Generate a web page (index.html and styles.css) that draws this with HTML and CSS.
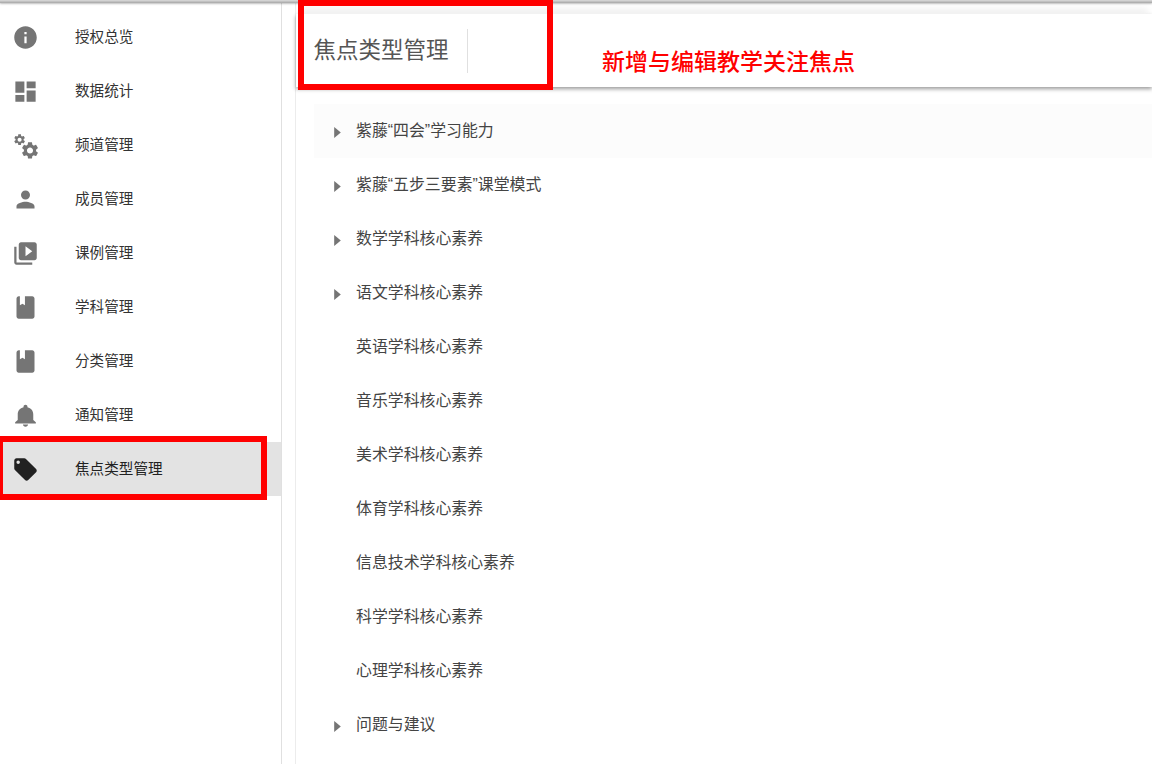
FILE: index.html
```html
<!DOCTYPE html>
<html lang="zh-CN">
<head>
    <meta charset="UTF-8">
    <meta name="viewport" content="width=device-width, initial-scale=1.0">
    <title>焦点类型管理</title>
    <link rel="stylesheet" href="styles.css">
</head>
<body>
    <div class="topbar"></div>
    <div class="layout">
        <nav class="sidebar">
            <a class="nav-item">
                <svg class="nav-icon" viewBox="0 0 24 24"><path d="M12 2C6.48 2 2 6.48 2 12s4.48 10 10 10 10-4.48 10-10S17.52 2 12 2zm1 15h-2v-6h2v6zm0-8h-2V7h2v2z"/></svg>
                <span>授权总览</span>
            </a>
            <a class="nav-item">
                <svg class="nav-icon" viewBox="0 0 24 24"><path d="M3 13h8V3H3v10zm0 8h8v-6H3v6zm10 0h8V11h-8v10zm0-18v6h8V3h-8z"/></svg>
                <span>数据统计</span>
            </a>
            <a class="nav-item">
                <svg class="nav-icon" viewBox="0 0 24 24">
                    <path transform="translate(0.75 0.8) scale(0.5)" d="M19.14 12.94c.04-.3.06-.61.06-.94 0-.32-.02-.64-.07-.94l2.03-1.58c.18-.14.23-.41.12-.61l-1.92-3.32c-.12-.22-.37-.29-.59-.22l-2.39.96c-.5-.38-1.03-.7-1.62-.94l-.36-2.54c-.04-.24-.24-.41-.48-.41h-3.84c-.24 0-.43.17-.47.41l-.36 2.54c-.59.24-1.13.57-1.62.94l-2.39-.96c-.22-.08-.47 0-.59.22L2.74 8.87c-.12.21-.08.47.12.61l2.03 1.58c-.05.3-.09.63-.09.94s.02.64.07.94l-2.03 1.58c-.18.14-.23.41-.12.61l1.92 3.32c.12.22.37.29.59.22l2.39-.96c.5.38 1.03.7 1.62.94l.36 2.54c.05.24.24.41.48.41h3.84c.24 0 .44-.17.47-.41l.36-2.54c.59-.24 1.13-.56 1.62-.94l2.39.96c.22.08.47 0 .59-.22l1.92-3.32c.12-.22.07-.47-.12-.61l-2.01-1.58zM12 15.6c-1.98 0-3.6-1.62-3.6-3.6s1.62-3.6 3.6-3.6 3.6 1.62 3.6 3.6-1.62 3.6-3.6 3.6z"/>
                    <path transform="translate(7 7.4) scale(0.75)" d="M19.14 12.94c.04-.3.06-.61.06-.94 0-.32-.02-.64-.07-.94l2.03-1.58c.18-.14.23-.41.12-.61l-1.92-3.32c-.12-.22-.37-.29-.59-.22l-2.39.96c-.5-.38-1.03-.7-1.62-.94l-.36-2.54c-.04-.24-.24-.41-.48-.41h-3.84c-.24 0-.43.17-.47.41l-.36 2.54c-.59.24-1.13.57-1.62.94l-2.39-.96c-.22-.08-.47 0-.59.22L2.74 8.87c-.12.21-.08.47.12.61l2.03 1.58c-.05.3-.09.63-.09.94s.02.64.07.94l-2.03 1.58c-.18.14-.23.41-.12.61l1.92 3.32c.12.22.37.29.59.22l2.39-.96c.5.38 1.03.7 1.62.94l.36 2.54c.05.24.24.41.48.41h3.84c.24 0 .44-.17.47-.41l.36-2.54c.59-.24 1.13-.56 1.62-.94l2.39.96c.22.08.47 0 .59-.22l1.92-3.32c.12-.22.07-.47-.12-.61l-2.01-1.58zM12 15.6c-1.98 0-3.6-1.62-3.6-3.6s1.62-3.6 3.6-3.6 3.6 1.62 3.6 3.6-1.62 3.6-3.6 3.6z"/>
                </svg>
                <span>频道管理</span>
            </a>
            <a class="nav-item">
                <svg class="nav-icon" viewBox="0 0 24 24"><path d="M12 12c2.21 0 4-1.79 4-4s-1.79-4-4-4-4 1.79-4 4 1.79 4 4 4zm0 2c-2.67 0-8 1.34-8 4v2h16v-2c0-2.66-5.33-4-8-4z"/></svg>
                <span>成员管理</span>
            </a>
            <a class="nav-item">
                <svg class="nav-icon" viewBox="0 0 24 24"><path d="M4 6H2v14c0 1.1.9 2 2 2h14v-2H4V6zm16-4H8c-1.1 0-2 .9-2 2v12c0 1.1.9 2 2 2h12c1.1 0 2-.9 2-2V4c0-1.1-.9-2-2-2zm-8 12.5v-9l6 4.5-6 4.5z"/></svg>
                <span>课例管理</span>
            </a>
            <a class="nav-item">
                <svg class="nav-icon" viewBox="0 0 24 24"><path d="M18 2h-6.5v8L9.3 8.6 7 10V2H6c-1.1 0-2 .9-2 2v16c0 1.1.9 2 2 2h12c1.1 0 2-.9 2-2V4c0-1.1-.9-2-2-2z"/></svg>
                <span>学科管理</span>
            </a>
            <a class="nav-item">
                <svg class="nav-icon" viewBox="0 0 24 24"><path d="M18 2h-6.5v8L9.3 8.6 7 10V2H6c-1.1 0-2 .9-2 2v16c0 1.1.9 2 2 2h12c1.1 0 2-.9 2-2V4c0-1.1-.9-2-2-2z"/></svg>
                <span>分类管理</span>
            </a>
            <a class="nav-item">
                <svg class="nav-icon" viewBox="0 0 24 24"><path transform="translate(-1.8 0) scale(1.15 1)" d="M12 22c1.1 0 2-.9 2-2h-4c0 1.1.9 2 2 2zm6-6v-5c0-3.07-1.63-5.64-4.5-6.32V4c0-.83-.67-1.5-1.5-1.5s-1.5.67-1.5 1.5v.68C7.64 5.36 6 7.92 6 11v5l-2 2v1h16v-1l-2-2z"/></svg>
                <span>通知管理</span>
            </a>
            <a class="nav-item active">
                <svg class="nav-icon" viewBox="0 0 24 24"><path d="M21.41 11.58l-9-9C12.05 2.22 11.55 2 11 2H4c-1.1 0-2 .9-2 2v7c0 .55.22 1.05.59 1.42l9 9c.36.36.86.58 1.41.58.55 0 1.05-.22 1.41-.59l7-7c.37-.36.59-.86.59-1.41 0-.55-.23-1.06-.59-1.42zM5.5 7C4.67 7 4 6.33 4 5.5S4.67 4 5.5 4 7 4.67 7 5.5 6.33 7 5.5 7z"/></svg>
                <span>焦点类型管理</span>
            </a>
        </nav>

        <main class="main">
            <header class="page-header">
                <h1 class="page-title">焦点类型管理</h1>
            </header>
            <ul class="tree">
                <li class="tree-row hover"><svg class="arrow" viewBox="0 0 6 10"><path d="M0 0l6 5-6 5z"/></svg><span>紫藤“四会”学习能力</span></li>
                <li class="tree-row"><svg class="arrow" viewBox="0 0 6 10"><path d="M0 0l6 5-6 5z"/></svg><span>紫藤“五步三要素”课堂模式</span></li>
                <li class="tree-row"><svg class="arrow" viewBox="0 0 6 10"><path d="M0 0l6 5-6 5z"/></svg><span>数学学科核心素养</span></li>
                <li class="tree-row"><svg class="arrow" viewBox="0 0 6 10"><path d="M0 0l6 5-6 5z"/></svg><span>语文学科核心素养</span></li>
                <li class="tree-row leaf"><span>英语学科核心素养</span></li>
                <li class="tree-row leaf"><span>音乐学科核心素养</span></li>
                <li class="tree-row leaf"><span>美术学科核心素养</span></li>
                <li class="tree-row leaf"><span>体育学科核心素养</span></li>
                <li class="tree-row leaf"><span>信息技术学科核心素养</span></li>
                <li class="tree-row leaf"><span>科学学科核心素养</span></li>
                <li class="tree-row leaf"><span>心理学科核心素养</span></li>
                <li class="tree-row"><svg class="arrow" viewBox="0 0 6 10"><path d="M0 0l6 5-6 5z"/></svg><span>问题与建议</span></li>
            </ul>
        </main>
    </div>

    <!-- Annotations drawn over the screenshot -->
    <div class="mark mark-title"></div>
    <div class="mark mark-nav"></div>
    <p class="note">新增与编辑教学关注焦点</p>
</body>
</html>
```

FILE: styles.css
```css
* {
    margin: 0;
    padding: 0;
    box-sizing: border-box;
}

html, body {
    height: 100%;
    overflow: hidden;
}

body {
    display: flex;
    flex-direction: column;
    background: #fff;
    color: #333;
    font-family: "Liberation Sans", "Noto Sans CJK SC", sans-serif;
}

.topbar {
    height: 3px;
    flex: none;
    background: linear-gradient(#dcdcdc, #a6a6a6);
    box-shadow: 0 1px 2px rgba(0, 0, 0, 0.25);
    position: relative;
    z-index: 2;
}

.layout {
    flex: 1;
    display: flex;
    min-height: 0;
}

.sidebar {
    width: 282px;
    flex: none;
    padding-top: 7px;
    border-right: 1px solid #e0e0e0;
}

.nav-item {
    display: flex;
    align-items: center;
    height: 54px;
    padding-left: 12px;
    font-size: 14.6px;
    color: #333;
}

.nav-item span {
    margin-left: 36px;
    margin-bottom: 4px;
}

.nav-icon {
    width: 27px;
    height: 27px;
    flex: none;
    fill: #757575;
}

.nav-item.active {
    background: #e3e3e3;
    color: #212121;
}

.nav-item.active .nav-icon {
    fill: #212121;
}

.main {
    flex: 1;
    margin-left: 13px;
    border-left: 1px solid #ececec;
    min-width: 0;
}

.page-header {
    height: 73px;
    margin-top: 11px;
    display: flex;
    align-items: center;
    background: #fff;
    box-shadow: 0 -10px 6px -4px #f2f2f2, 0 2px 4px rgba(0, 0, 0, 0.4);
    position: relative;
}

.page-title {
    height: 44px;
    line-height: 44px;
    margin-left: 17.5px;
    padding-right: 18.5px;
    border-right: 1px solid #e0e0e0;
    font-size: 22.5px;
    font-weight: 400;
    color: #555;
}

.tree {
    list-style: none;
    margin-top: 17px;
    margin-left: 18px;
}

.tree-row {
    display: flex;
    align-items: center;
    height: 54px;
    padding-left: 20px;
    font-size: 15.9px;
    color: #444;
}

.tree-row span {
    margin-bottom: 4px;
}

.tree-row.hover {
    background: #fcfcfc;
}

.tree-row.leaf {
    padding-left: 42px;
}

.arrow {
    width: 7px;
    height: 11px;
    margin-top: 2px;
    margin-right: 15px;
    flex: none;
    fill: #757575;
}

.mark {
    position: absolute;
    z-index: 3;
    border: 6px solid #f00;
}

.mark-title {
    left: 298px;
    top: 0;
    width: 255px;
    height: 90px;
}

.mark-nav {
    left: -3px;
    top: 436px;
    width: 270px;
    height: 64px;
}

.note {
    position: absolute;
    left: 602px;
    top: 43px;
    font-size: 23px;
    font-weight: 500;
    line-height: 34px;
    color: #f00;
    font-family: "Noto Sans CJK SC", sans-serif;
}
```
